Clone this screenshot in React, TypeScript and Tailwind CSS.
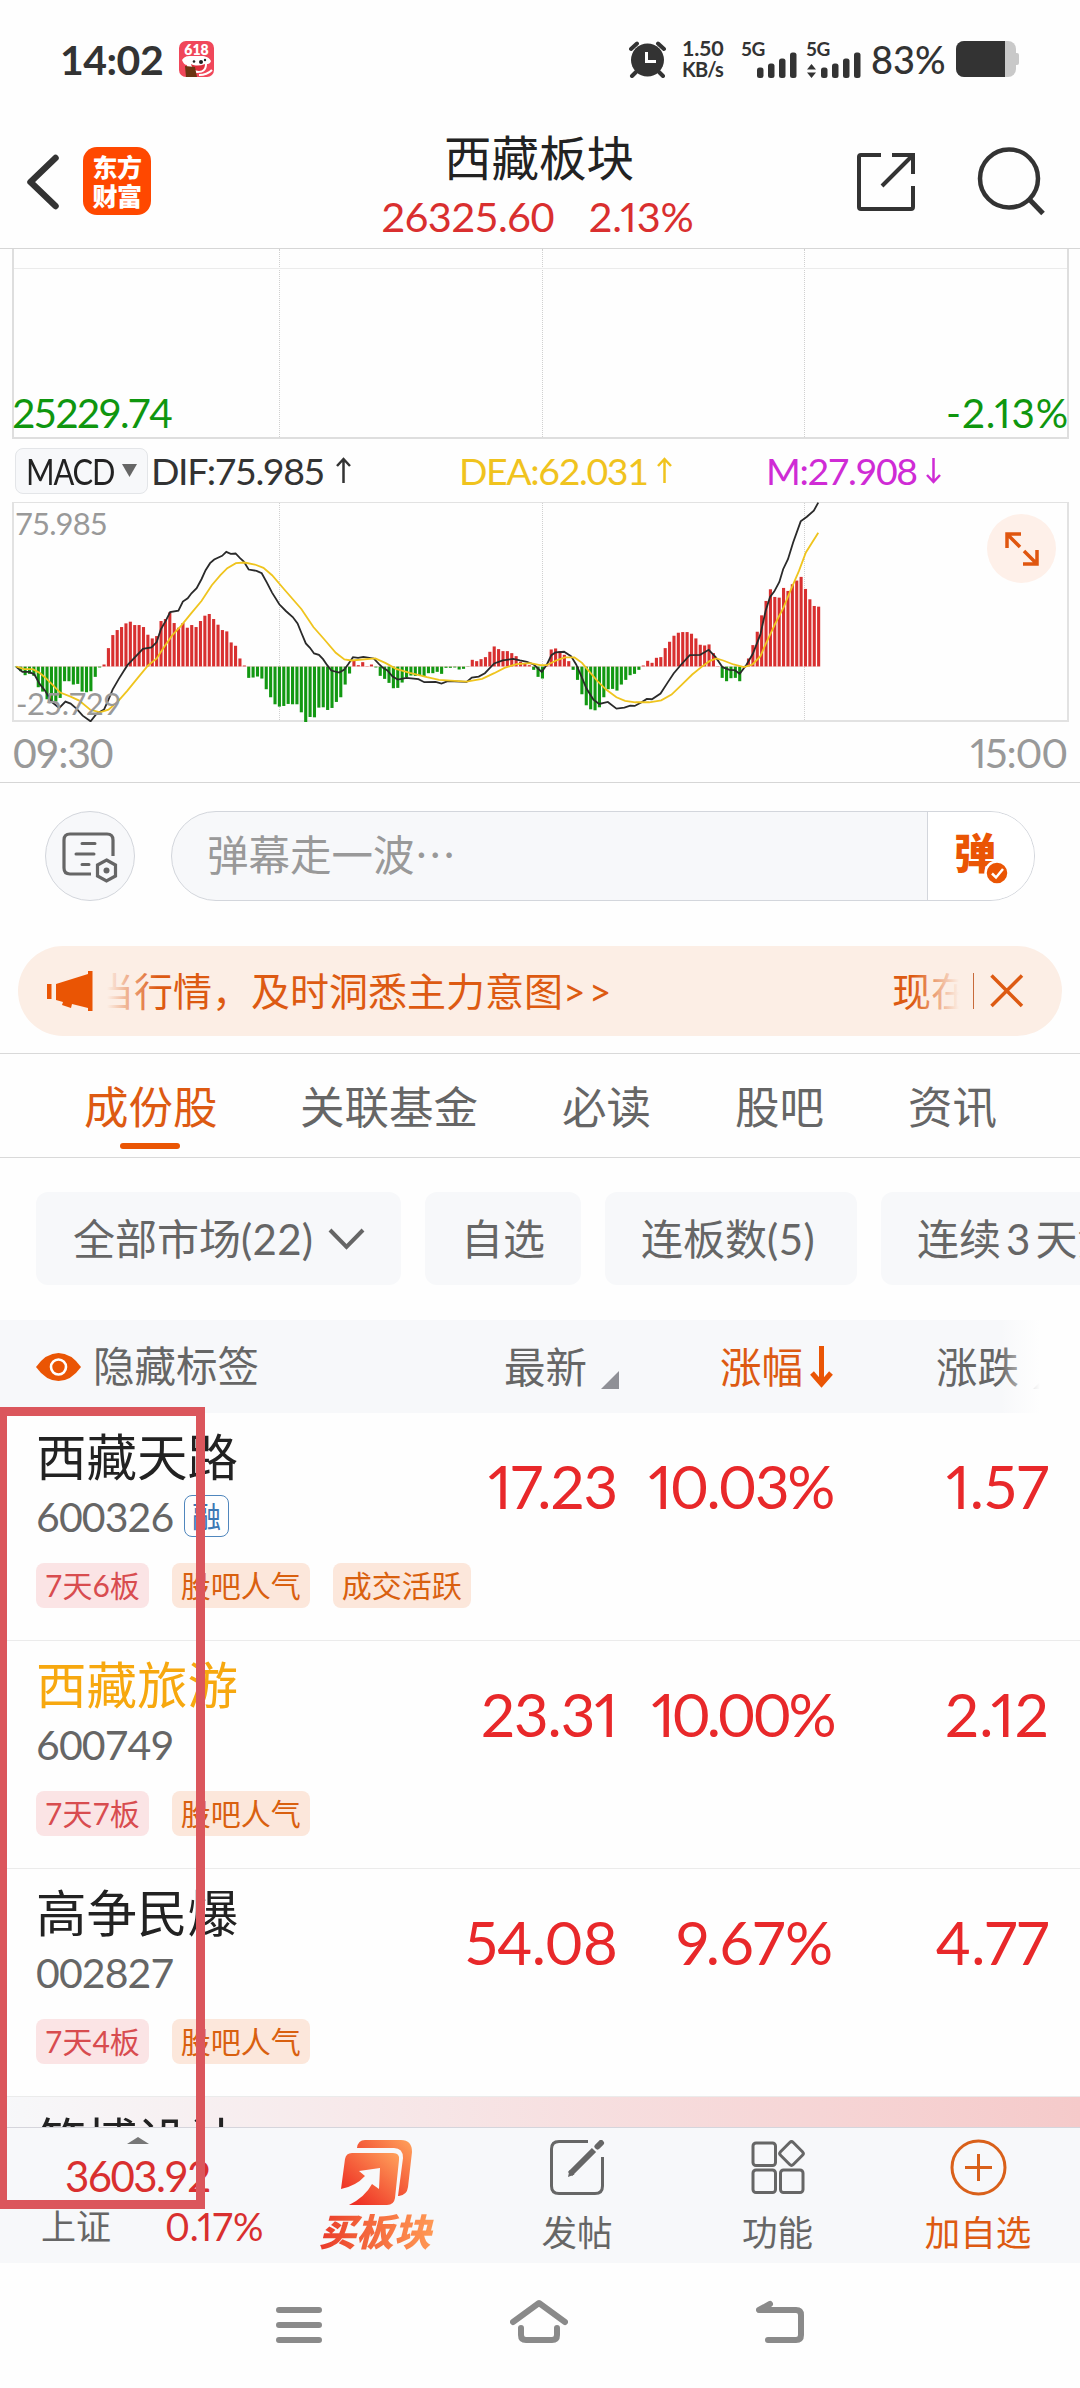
import type { ReactNode } from "react";

// histogram of the MACD chart, one value per minute, in chart units
const histogram = [
  -2, -14, -26, -22, -28, -62, -75, -98, -108, -105, -94, -44, -44, -54, -52, -75, -77, -74, -31, -3,
  6, 55, 94, 109, 118, 129, 134, 124, 124, 118, 95, 84, 91, 136, 142, 162, 130, 116, 130, 116,
  124, 118, 136, 152, 157, 142, 125, 109, 105, 72, 62, 24, 3, -34, -33, -30, -36, -68, -92, -113,
  -120, -118, -112, -113, -113, -137, -166, -151, -152, -123, -122, -130, -124, -106, -92, -54, -21, 18, 4, 13,
  1, 6, -3, -28, -37, -49, -65, -64, -48, -32, -27, -28, -26, -30, -20, -20, -16, -22, -4, -4,
  -3, -9, -7, -1, 20, 16, 22, 28, 44, 60, 52, 46, 46, 40, 31, 14, 8, 4, -10, -31,
  -36, 3, 51, 54, 46, 35, 16, -10, -40, -83, -116, -128, -131, -122, -92, -68, -67, -72, -54, -40,
  -26, -22, -10, 3, 17, 11, 26, 28, 55, 74, 92, 101, 103, 103, 98, 84, 65, 63, 66, 40,
  1, -34, -44, -35, -34, -44, -2, 24, 64, 104, 153, 196, 231, 208, 206, 235, 226, 246, 257, 268,
  232, 201, 181, 179,
];

const difLine =
  "47,857 65,872 85,872 100,880 115,908 132,930 150,962 172,980 190,961 205,967 222,982 240,1003 263,1020 280,998 302,985 315,955 327,925 345,893 370,852 395,825 415,803 440,799 455,783 467,745 480,722 494,693 518,689 531,662 545,652 556,637 571,622 585,595 597,568 610,547 622,536 645,525 657,513 670,519 684,518 697,532 708,542 722,566 745,570 760,577 775,605 790,635 811,670 830,690 850,708 864,727 875,755 888,787 900,800 912,817 926,821 938,834 950,852 962,868 985,874 1000,865 1012,848 1025,828 1040,830 1055,827 1085,832 1100,848 1112,860 1125,868 1140,886 1155,895 1180,890 1215,894 1232,903 1265,902 1282,907 1300,900 1355,902 1370,889 1390,886 1408,876 1435,847 1460,838 1490,833 1510,838 1530,842 1550,850 1562,862 1573,872 1588,850 1601,822 1613,814 1638,812 1658,825 1673,850 1688,885 1703,922 1723,955 1740,968 1765,962 1790,982 1813,979 1830,973 1843,974 1863,963 1878,953 1893,954 1918,937 1938,905 1956,877 1978,850 2003,822 2033,821 2058,806 2078,828 2098,858 2118,866 2133,867 2148,878 2168,850 2186,818 2208,760 2223,690 2236,648 2248,632 2263,603 2274,565 2288,535 2303,485 2325,422 2343,408 2363,390 2376,366";

const deaLine =
  "47,856 70,864 95,864 115,875 130,888 150,908 175,934 205,946 230,958 262,985 290,993 315,985 340,963 370,928 400,890 430,853 455,832 475,800 500,763 525,735 555,697 585,660 615,613 640,583 660,562 685,547 710,545 740,551 765,561 790,583 825,625 875,684 910,738 940,773 975,815 1000,835 1020,838 1090,832 1120,846 1150,863 1190,875 1240,888 1275,896 1355,901 1400,893 1435,876 1465,860 1500,849 1540,846 1568,852 1588,852 1615,838 1640,829 1668,829 1690,845 1710,870 1735,900 1760,925 1790,948 1815,959 1845,963 1885,963 1920,957 1950,940 1980,910 2010,880 2040,855 2060,840 2080,832 2100,838 2130,850 2160,858 2185,850 2208,825 2225,785 2250,730 2275,680 2295,630 2320,570 2340,515 2376,456";

const stocks = [
  {
    name: "西藏天路",
    code: "600326",
    margin: true,
    color: "text-[#222222]",
    tags: ["7天6板", "股吧人气", "成交活跃"],
    price: "17.23",
    percent: "10.03%",
    spacing: "tracking-[-2.3px]",
    change: "1.57",
  },
  {
    name: "西藏旅游",
    code: "600749",
    margin: false,
    color: "text-[#f7a80f]",
    tags: ["7天7板", "股吧人气"],
    price: "23.31",
    percent: "10.00%",
    spacing: "tracking-[-3.6px]",
    change: "2.12",
  },
  {
    name: "高争民爆",
    code: "002827",
    margin: false,
    color: "text-[#222222]",
    tags: ["7天4板", "股吧人气"],
    price: "54.08",
    percent: "9.67%",
    spacing: "tracking-normal",
    change: "4.77",
  },
];

function Signal() {
  return (
    <svg width="40" height="26" viewBox="0 0 40 26" fill="#333">
      <rect x="0" y="15.500" width="6.500" height="10.500" rx="2.500" />
      <rect x="11" y="11.500" width="6.500" height="14.500" rx="2.500" />
      <rect x="22" y="6.500" width="6.500" height="19.500" rx="2.500" />
      <rect x="33" y="0.500" width="6.500" height="25.500" rx="2.500" />
    </svg>
  );
}

function StatusBar() {
  return (
    <div className="flex h-[118px] items-center pl-[60px] text-[#333333]">
      <div className="w-[119px] text-[41px] font-bold leading-none tracking-[-0.5px]">14:02</div>
      <svg width="35" height="36" viewBox="0 0 35 36">
        <rect width="35" height="36" rx="7" fill="#f0475a" />
        <text x="17.500" y="14" textAnchor="middle" fontSize="14" fontWeight="800" fill="#fff">618</text>
        <path d="M3 19c3-5 8-4 11-4h7c4 0 8 0 11 5-1 3-3 3-4 3 0 6-3 9-10 9S8 29 8 24c-2 0-4-2-5-5z" fill="#fff" />
        <path d="M12 23c4 2 9 2 14 0 0 4-2 7-6 7s-7-3-8-7z" fill="#dd2f3c" />
        <circle cx="15" cy="20.500" r="1.300" fill="#222" />
        <circle cx="22" cy="21" r="2" fill="#222" />
        <circle cx="26" cy="19" r="1.200" fill="#222" />
        <path d="M6 25l10 1 2 10H7z" fill="#6b3512" />
        <path d="M20 34c6 0 10-2 13-5" stroke="#fff" strokeWidth="2" fill="none" />
      </svg>
      {/* Right side icons */}
      <svg className="ml-[415px]" width="37" height="37" viewBox="0 0 37 37" fill="none" stroke="#333">
        <circle cx="18.500" cy="19" r="16.500" fill="#333" stroke="none" />
        <path d="M2 8l6-5.500M35 8l-6-5.500M7 31l-4 4M30 31l4 4" strokeWidth="4" strokeLinecap="round" />
        <path d="M17.500 11v9.500H27" stroke="#fff" strokeWidth="3" />
      </svg>
      <div className="ml-4 w-[59px] text-[21.500px] font-bold leading-[21px] tracking-[-0.3px]">
        <div>1.50</div>
        <div className="text-[20px] tracking-[-0.8px]">KB/s</div>
      </div>
      <div className="flex h-[37px] w-[65px] items-end">
        <span className="self-start text-[19px] font-bold leading-[16px] tracking-[-0.5px]">5G</span>
        <span className="-ml-[8px]"><Signal /></span>
      </div>
      <div className="flex h-[37px] w-[65px]">
        <div className="flex w-[15px] flex-col justify-between">
          <span className="text-[19px] font-bold leading-[16px] tracking-[-0.5px]">5G</span>
          <svg width="11" height="14" viewBox="0 0 11 14" fill="#333">
            <path d="M5.500 0L10 5.500H1zM5.500 14L10 8.500H1z" />
          </svg>
        </div>
        <span className="self-end"><Signal /></span>
      </div>
      <div className="w-[85px] text-[38px] font-medium leading-none">83%</div>
      <svg width="63" height="36" viewBox="0 0 63 36">
        <rect width="60" height="36" rx="8" fill="#c9c9c9" />
        <rect x="58" y="12" width="5" height="12" rx="2" fill="#c9c9c9" />
        <path d="M8 0H49V36H8a8 8 0 0 1-8-8V8a8 8 0 0 1 8-8z" fill="#333" />
      </svg>
    </div>
  );
}

function Header() {
  return (
    <header className="flex h-[131px] border-b border-[#d6d6d6] pl-[26px] pr-[34px]">
      <svg className="mt-[36px]" width="34" height="56" viewBox="0 0 34 56" fill="none" stroke="#333" strokeWidth="6.500" strokeLinecap="round" strokeLinejoin="round">
        <path d="M29.500 4L4.500 28l25 24" />
      </svg>
      <div className="ml-[23px] mt-[29px] flex h-[68px] w-[68px] flex-col items-center rounded-[14px] bg-[#ff4800] pt-[6px] text-[25px] font-black leading-[28.500px] tracking-[-0.5px] text-white">
        <span>东方</span>
        <span>财富</span>
      </div>
      <div className="flex flex-1 flex-col items-center pl-[71px] pt-[16px]">
        <h1 className="text-[47.500px] leading-none text-[#222222]">西藏板块</h1>
        <div className="-ml-[3px] mt-[14px] flex gap-[35px] text-[41.500px] leading-none text-[#d92f2f] tracking-[-0.7px]">
          <span>26325.60</span>
          <span className="tracking-normal proportional-nums">2.13%</span>
        </div>
      </div>
      <svg className="mt-[34px]" width="61" height="60" viewBox="0 0 61 60" fill="none" stroke="#333" strokeWidth="4">
        <path d="M25 3H5Q3 3 3 5V55Q3 57 5 57H55Q57 57 57 55V34" />
        <path d="M36 3H57V22M56 4L26 34" />
      </svg>
      <svg className="ml-[60px] mt-[28px]" width="69" height="70" viewBox="0 0 69 70" fill="none" stroke="#333" strokeWidth="4.500">
        <circle cx="32" cy="32.500" r="29" />
        <path d="M52 53L66 67.500" strokeWidth="5" />
      </svg>
    </header>
  );
}

function GridLines() {
  return (
    <>
      <div className="w-[266px] border-r border-dotted border-[#d0d0d0]" />
      <div className="w-[263px] border-r border-dotted border-[#d0d0d0]" />
      <div className="w-[262px] border-r border-dotted border-[#d0d0d0]" />
    </>
  );
}

function Arrow({ down = false }: { down?: boolean }) {
  return (
    <svg className={down ? "rotate-180" : ""} width="15" height="27" viewBox="0 0 15 27" fill="none" stroke="currentColor" strokeWidth="2.500">
      <path d="M7.500 26V2M1 9l6.500-7L14 9" />
    </svg>
  );
}

function PriceChart() {
  return (
    <section className="relative ml-3 mr-[11px] h-[190px] border-x-2 border-b-2 border-[#dedede]">
      <div className="flex h-full">
        <GridLines />
      </div>
      <div className="absolute left-0 top-[19px] h-px w-full bg-[#ebebeb]" />
      <div className="absolute bottom-[4px] left-[-2px] flex w-[1057px] justify-between text-[40.500px] leading-none text-[#0f960f]">
        <span className="tracking-[-1.9px]">25229.74</span>
        <span className="tracking-[0.9px] proportional-nums">-2.13%</span>
      </div>
    </section>
  );
}

function Macd() {
  return (
    <section className="h-[344px] border-b border-[#d6d6d6]">
      <div className="flex h-[63px] items-center pl-[15px] text-[37.500px] leading-none tracking-[-1.4px]">
        <div className="flex h-[46px] w-[133px] items-center rounded-lg border border-[#e3e5e8] bg-[#f7f8fa] pl-[10px] text-[#222222]">
          <span className="w-[86px] origin-left scale-x-[0.82]">MACD</span>
          <svg className="ml-[10px]" width="15" height="13" viewBox="0 0 15 13" fill="#666"><path d="M0 0H15L7.500 13z" /></svg>
        </div>
        <div className="ml-[3px] flex w-[308px] items-center gap-[12px] text-[#333333]">DIF:75.985 <Arrow /></div>
        <div className="flex w-[307px] items-center gap-[9px] text-[#f0c31e]">DEA:62.031 <Arrow /></div>
        <div className="flex items-center gap-[9px] text-[#cf2bd5]">M:27.908 <Arrow down /></div>
      </div>
      <div className="relative h-[220px]">
        <div className="ml-3 mr-[11px] flex h-full border-x-2 border-b-2 border-t border-[#e2e2e2]">
          <GridLines />
        </div>
        <svg className="absolute inset-0 h-full w-full" viewBox="0 364 3136 658" preserveAspectRatio="none" fill="none">
          {histogram.map((v, i) => (
            <rect
              key={i}
              x={43 + i * 12.73}
              y={v > 0 ? 856 - v : 856}
              width="9"
              height={Math.abs(v)}
              fill={v > 0 ? "#d83030" : "#129812"}
            />
          ))}
          <path d="M47 856H2380" stroke="#e8a0a0" strokeWidth="1" />
          <polyline points={difLine} stroke="#2a2a2a" strokeWidth="1.800" vectorEffect="non-scaling-stroke" />
          <polyline points={deaLine} stroke="#efc41e" strokeWidth="1.800" vectorEffect="non-scaling-stroke" />
        </svg>
        <div className="absolute left-[15px] top-[6px] text-[31px] leading-none tracking-[-0.9px] text-[#999999]">75.985</div>
        <div className="absolute bottom-[3px] left-[16px] text-[31px] leading-none tracking-[-0.6px] text-[#999999]">-25.729</div>
        <div className="absolute right-[24px] top-[12px] flex h-[69px] w-[69px] items-center justify-center rounded-full bg-[#fef0e9]">
          <svg width="34" height="34" viewBox="0 0 34 34" fill="none" stroke="#e0560f" strokeWidth="3.500">
            <path d="M2 16V2H16M2 2L15 15M32 18V32H18M32 32L19 19" />
          </svg>
        </div>
      </div>
      <div className="flex justify-between px-[13px] pt-[10px] text-[41px] leading-none text-[#999999] tracking-[-1.2px]">
        <span>09:30</span>
        <span className="proportional-nums">15:00</span>
      </div>
    </section>
  );
}

function Danmaku() {
  return (
    <div className="flex h-[163px] pl-[45px] pt-[28px]">
      <div className="flex h-[90px] w-[90px] items-center justify-center rounded-full border border-[#d3d6dc] bg-[#f7f8fa]">
        <svg className="mt-[3px]" width="56" height="54" viewBox="0 0 56 54" fill="none" stroke="#666" strokeWidth="3.200">
          <path d="M51 25V9Q51 3 45 3H8Q2 3 2 9V37Q2 43 8 43H29" />
          <path d="M20 12.500H33M14 23H32M20 33.500H27" strokeWidth="3" strokeLinecap="round" />
          <path d="M44.500 29l9 5v11l-9 5-9-5V34z" />
          <circle cx="44.500" cy="39.500" r="3" fill="#666" stroke="none" />
        </svg>
      </div>
      <div className="ml-[36px] flex h-[90px] w-[864px] overflow-hidden rounded-full border border-[#d3d6dc] bg-[#f7f8fa]">
        <div className="flex-1 pl-[35px] pt-[21px] font-['Noto_Sans_CJK_SC',sans-serif] text-[41.500px] leading-none text-[#999999]">弹幕走一波…</div>
        <div className="relative w-[107px] border-l border-[#d3d6dc] bg-white pl-[26px] pt-[20px] text-[42px] font-black leading-none text-[#ea5504]">
          弹
          <svg className="absolute left-[56px] top-[48px]" width="26" height="26" viewBox="0 0 26 26">
            <circle cx="13" cy="13" r="11.500" fill="#ea5504" stroke="#fff" strokeWidth="2.500" />
            <path d="M8 13.500l4 4 7-8.500" fill="none" stroke="#fff" strokeWidth="2.500" />
          </svg>
        </div>
      </div>
    </div>
  );
}

function Notice() {
  return (
    <div className="mx-[18px] flex h-[90px] items-center rounded-full bg-[#fceee5] pl-[29px] text-[39px] leading-none text-[#dd5a12]">
      <svg width="46" height="40" viewBox="0 0 46 40" fill="#ea5504">
        <path d="M0 13h4.500v15H0zM9 13L41 3V0h4.500v40H41v-3l-16-4-1 4-9-3 1-3-7-2z" />
      </svg>
      <div className="relative ml-[14px] flex h-[50px] w-[852px] items-center overflow-hidden whitespace-nowrap">
        <span className="-ml-[12px] w-[797px] shrink-0">当行情，及时洞悉主力意图<span className="tracking-[3px]">&gt;&gt;</span></span>
        <span>现在</span>
        <div className="absolute left-0 top-0 h-full w-[50px] bg-linear-to-r from-[#fceee5] to-transparent" />
        <div className="absolute right-0 top-0 h-full w-[46px] bg-linear-to-l from-[#fceee5] to-transparent" />
      </div>
      <div className="ml-[14px] h-9 w-px bg-[#c76a3a]" />
      <svg className="ml-[16px]" width="34" height="34" viewBox="0 0 34 34" stroke="#dd5a12" strokeWidth="3.500">
        <path d="M1.500 1.500L32 32M32 1.500L1.500 32" />
      </svg>
    </div>
  );
}

function Tabs() {
  return (
    <nav className="mt-[17px] flex h-[105px] border-y border-[#d9d9d9] pl-[84px] pt-[31px] text-[44.500px] leading-none text-[#666666]">
      <div className="flex w-[216px] flex-col text-[#dd5a12]">
        成份股
        <span className="ml-9 mt-[13px] h-[6px] w-[60px] rounded-full bg-[#ea5504]" />
      </div>
      <div className="w-[262px]">关联基金</div>
      <div className="w-[173px]">必读</div>
      <div className="w-[173px]">股吧</div>
      <div>资讯</div>
    </nav>
  );
}

function Chip({ children }: { children: ReactNode }) {
  return (
    <div className="flex h-[93px] shrink-0 items-center whitespace-nowrap rounded-xl bg-[#f7f8fa] px-9 text-[42px] leading-none text-[#666666]">
      {children}
    </div>
  );
}

function Filters() {
  return (
    <div className="flex h-[162px] gap-6 overflow-hidden pl-9 pt-[34px]">
      <Chip>
        <span className="pl-px">全部市场</span><span className="w-[74px] tracking-[0.3px]">(22)</span>
        <svg className="ml-[13px]" width="37" height="22" viewBox="0 0 37 22" fill="none" stroke="#666" strokeWidth="4">
          <path d="M2 2L18.500 19L35 2" />
        </svg>
      </Chip>
      <Chip>自选</Chip>
      <Chip>连板数<span className="w-[54px] tracking-[0.5px]">(5)</span></Chip>
      <Chip><span className="pr-[5px]">连续</span>3<span className="pl-[5px]">天涨停</span></Chip>
    </div>
  );
}

function Corner() {
  return <svg className="ml-[14px] self-end" width="18" height="18" viewBox="0 0 18 18" fill="#8f9096"><path d="M18 0V18H0z" /></svg>;
}

function TableHead() {
  return (
    <div className="relative flex h-[93px] items-center bg-[#f7f8fa] text-[41.500px] leading-none text-[#666666]">
      <svg className="ml-9" width="45" height="28" viewBox="0 0 45 28">
        <path d="M0 14Q10 0 22.500 0T45 14Q35 28 22.500 28T0 14z" fill="#ea5504" />
        <circle cx="22.500" cy="14" r="7.500" fill="#ea5504" stroke="#fff" strokeWidth="2.600" />
      </svg>
      <span className="ml-[12px] w-[411px]">隐藏标签</span>
      <div className="flex w-[216px] items-center"><span className="pt-[3px]">最新</span><Corner /></div>
      <div className="flex w-[216px] items-center text-[#dd5a12]">
        <span className="pt-[3px]">涨幅</span>
        <svg className="ml-[7px]" width="23" height="42" viewBox="0 0 23 42" fill="none" stroke="#ea5504" strokeWidth="5">
          <path d="M11.500 0V38M2 27l9.500 11L21 27" />
        </svg>
      </div>
      <div className="flex items-center"><span className="pt-[3px]">涨跌</span><Corner /></div>
      <div className="absolute right-0 top-0 h-full w-[80px] bg-linear-to-r from-white/0 to-[#fefefe] to-50%" />
    </div>
  );
}

function Rows() {
  return (
    <div>
      {stocks.map((s) => (
        <div key={s.code} className="flex h-[228px] border-b border-[#ebebeb] pl-9">
          <div className="w-[424px] shrink-0 pt-[19px]">
            <div className={`text-[50.500px] leading-none ${s.color}`}>{s.name}</div>
            <div className="mt-[13px] flex h-[41px] items-center text-[41px] leading-none text-[#666666]">
              <span className="w-[148px] tracking-[-0.9px]">{s.code}</span>
              {s.margin && (
                <span className="flex h-[42px] w-[45px] items-center justify-center rounded-lg border-[1.500px] border-[#4f86bd] text-[29px] text-[#3d78b4]">融</span>
              )}
            </div>
            <div className="mt-[26px] flex gap-[23px] whitespace-nowrap text-[30px] leading-none">
              {s.tags.map((t, i) => (
                <span
                  key={t}
                  className={
                    i === 0
                      ? "flex h-[45px] items-center rounded-lg bg-[#fbe4e5] px-[9px] text-[#d84c4f]"
                      : "flex h-[45px] items-center rounded-lg bg-[#fce7db] px-[9px] text-[#d9600f]"
                  }
                >
                  {t}
                </span>
              ))}
            </div>
          </div>
          <div className="flex pt-[43px] text-right text-[60px] leading-none text-[#e8282a] proportional-nums">
            <span className="w-[157px] tracking-[-1px]">{s.price}</span>
            <span className={`w-[216px] ${s.spacing}`}>{s.percent}</span>
            <span className="w-[216px] tracking-[0.2px]">{s.change}</span>
          </div>
        </div>
      ))}
      {/* Row cut off by the bottom bar */}
      <div className="h-[30px] overflow-hidden bg-linear-to-r from-[#f7f8fa] to-[#f5caca] pl-9 pt-[19px] text-[50.500px] leading-none text-[#222222]">
        筑博设计
      </div>
    </div>
  );
}

function BottomBar() {
  return (
    <div className="flex h-[136px] border-t border-[#d5d5dc] bg-[#f7f8fa] text-[35.500px] leading-none text-[#666666]">
      <div className="w-[277px]">
        <svg className="ml-[127px] mt-[9px]" width="22" height="7" viewBox="0 0 22 7" fill="#777"><path d="M0 7L11 0L22 7z" /></svg>
        <div className="ml-[65px] mt-[11px] text-[42px] tracking-[-1.6px] text-[#d92f2f]">3603.92</div>
        <div className="mt-[10px] flex items-center pl-[41px]">
          <span className="w-[124px] text-[35px]">上证</span>
          <span className="text-[38px] tracking-[0.2px] text-[#d92f2f] proportional-nums">0.17%</span>
        </div>
      </div>
      <div className="flex w-[200px] flex-col items-center pt-[12px]">
        <svg width="72" height="66" viewBox="0 0 72 66">
          <defs>
            <linearGradient id="buy" x1="0" y1="1" x2="1" y2="0">
              <stop offset="0.150" stopColor="#ee3024" />
              <stop offset="1" stopColor="#ffa35c" />
            </linearGradient>
          </defs>
          <path d="M16 8Q17 0 24 0H60Q71 0 71 12L67 47Q66 55 58 56H57L62 18Q62 8 53 8z" fill="url(#buy)" />
          <path d="M4 19Q5 13 11 13H52Q59 13 58 20L54 58Q53 65 46 65H8Q24 57 31 44L38 49L39 28L18 31L24 36Q15 46 0 49z" fill="url(#buy)" />
        </svg>
        <span className="mt-[5px] mr-[4px] bg-linear-to-r from-[#e83228] to-[#ff9a55] bg-clip-text px-1 py-[2px] text-[37.500px] font-black italic text-transparent">买板块</span>
      </div>
      <div className="flex w-[200px] flex-col items-center pt-[12px]">
        <svg width="55" height="55" viewBox="0 0 55 55" fill="none" stroke="#666" strokeWidth="3">
          <path d="M38 1.500H9Q1.500 1.500 1.500 9V46Q1.500 53.500 9 53.500H45Q52.500 53.500 52.500 46V17" />
          <path d="M20 34L44 10" strokeWidth="6" />
          <path d="M47.500 6.500L51 3" strokeWidth="6" strokeLinecap="round" />
          <path d="M18 37l1.500-7 5 4.500z" fill="#666" stroke="none" />
        </svg>
        <span className="mt-[20px]">发帖</span>
      </div>
      <div className="flex w-[201px] flex-col items-center pt-[12px]">
        <svg width="54" height="55" viewBox="0 0 54 55" fill="none" stroke="#666" strokeWidth="3">
          <rect x="2" y="3" width="22.500" height="22.500" rx="3" />
          <rect x="2" y="30" width="22.500" height="22.500" rx="3" />
          <rect x="29.500" y="30" width="22.500" height="22.500" rx="3" />
          <rect x="31.500" y="4.500" width="18" height="18" rx="2.500" transform="rotate(45 40.500 13.500)" />
        </svg>
        <span className="mt-[20px]">功能</span>
      </div>
      <div className="flex w-[200px] flex-col items-center pt-[11px] text-[#dd5a12]">
        <svg width="57" height="57" viewBox="0 0 57 57" fill="none" stroke="#d9601a" strokeWidth="3">
          <circle cx="28.500" cy="28.500" r="26.500" />
          <path d="M28.500 15V42M15 28.500H42" />
        </svg>
        <span className="mt-[19px]">加自选</span>
      </div>
    </div>
  );
}

function SystemNav() {
  return (
    <div className="flex h-[126px] justify-center gap-[188px] pr-[1px] pt-[36px]">
      <svg width="46" height="50" viewBox="0 0 46 50" stroke="#8a8a8a" strokeWidth="6" strokeLinecap="round">
        <path d="M3 11H43M3 26H43M3 41H43" />
      </svg>
      <svg width="58" height="50" viewBox="0 0 58 50" fill="none" stroke="#8a8a8a" strokeWidth="6" strokeLinecap="round" strokeLinejoin="round">
        <path d="M3 23L29 4L55 23M11 29V36Q11 41 16 41H42Q47 41 47 36V29" />
      </svg>
      <svg width="48" height="50" viewBox="0 0 48 50" fill="none" stroke="#8a8a8a" strokeWidth="6" strokeLinecap="round" strokeLinejoin="round">
        <path d="M14 5L3 11H40Q45 11 45 16V36Q45 41 40 41H12" />
      </svg>
    </div>
  );
}

function App() {
  return (
    <div className="relative h-[2388px] w-[1080px] overflow-hidden bg-[#fefefe] font-[Lato,'Noto_Sans_CJK_SC',sans-serif]">
      <StatusBar />
      <Header />
      <PriceChart />
      <Macd />
      <Danmaku />
      <Notice />
      <Tabs />
      <Filters />
      <TableHead />
      <Rows />
      <BottomBar />
      <SystemNav />

      {/* Highlight box */}
      <div className="absolute left-0 top-[1407px] h-[802px] w-[205px] border-[9px] border-l-[7px] border-[#db565c]" />
    </div>
  );
}

export default App;
